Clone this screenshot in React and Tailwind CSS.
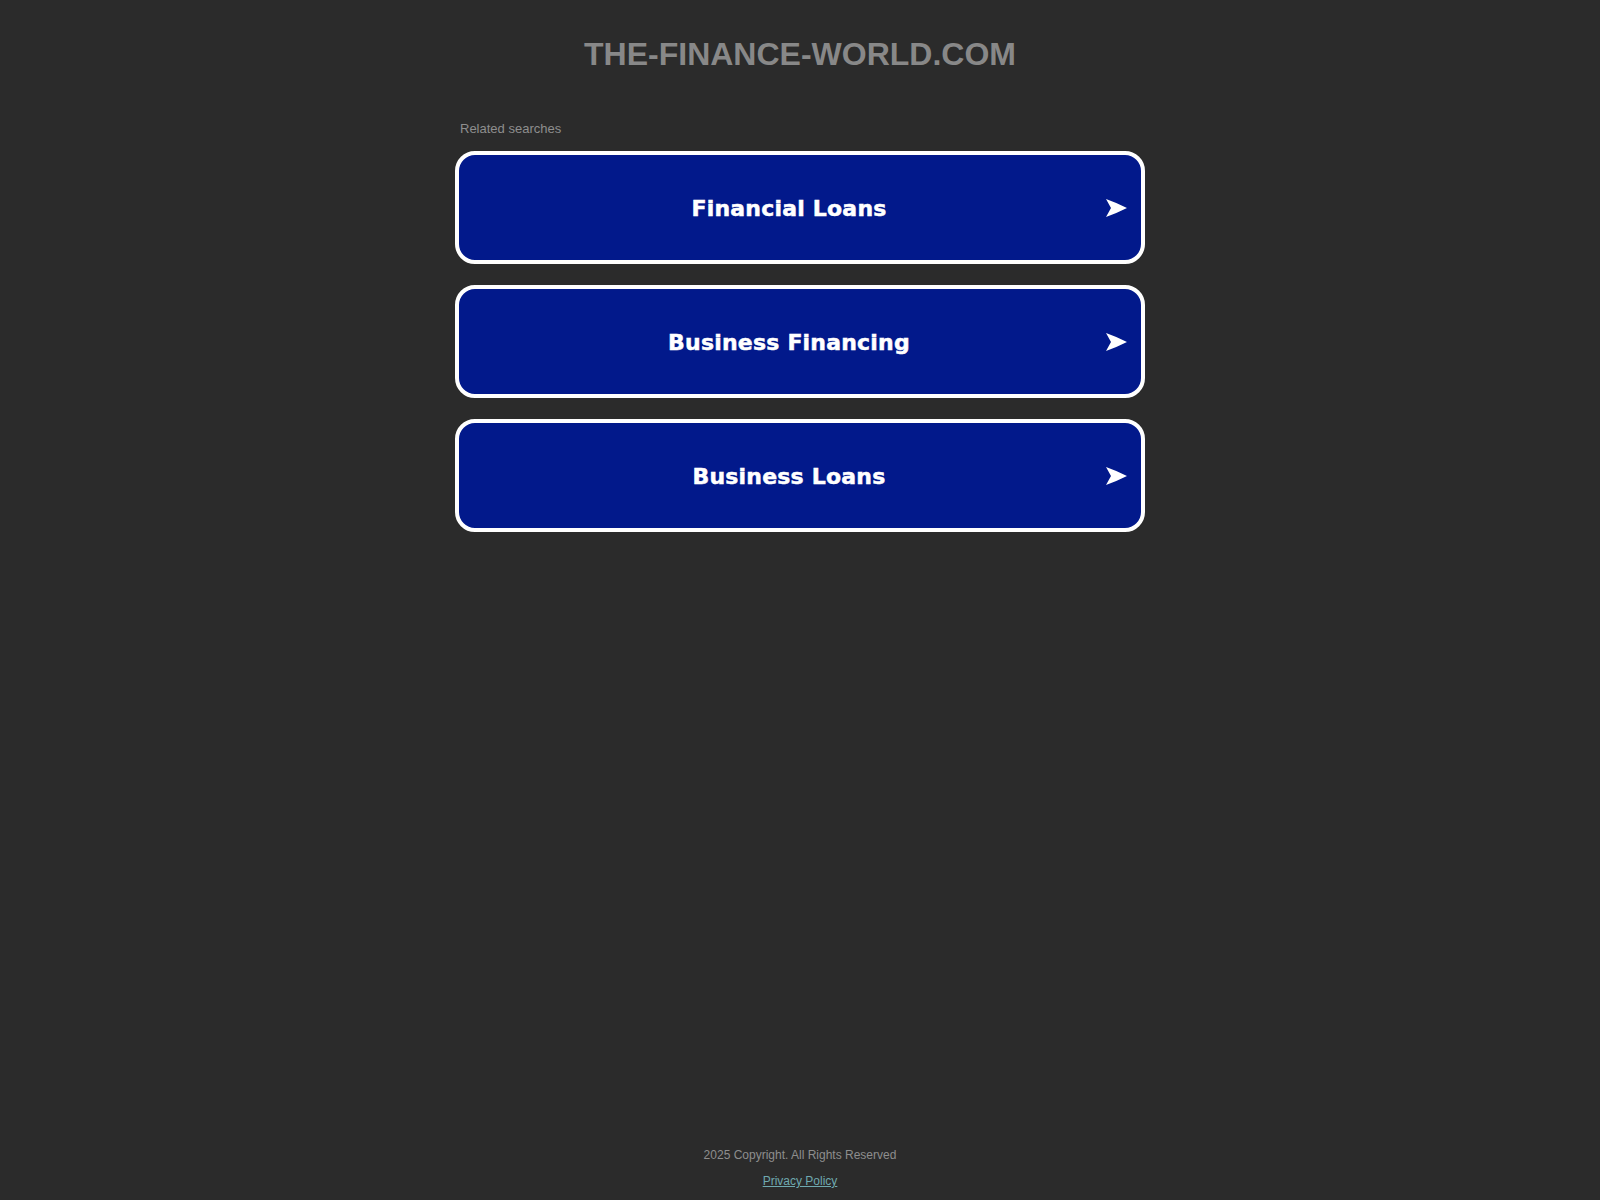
const searches = ['Financial Loans', 'Business Financing', 'Business Loans'];

function Arrow() {
  return (
    <svg className="w-[21px] h-[18px] shrink-0" viewBox="0 0 21 18" fill="#ffffff">
      <path d="M0 0 Q10 3.5 21 9 Q10 14.5 0 18 L5 9 Z" />
    </svg>
  );
}

export default function App() {
  return (
    <div className="min-h-screen flex flex-col bg-[#2b2b2b] font-['Liberation_Sans',Arial,sans-serif]">
      <main className="flex-1 flex flex-col items-center pt-[35px]">
        <h1 className="text-[32px] leading-[38px] font-bold text-[#888888]">
          THE-FINANCE-WORLD.COM
        </h1>

        <div className="w-[690px] mt-[48px]">
          <p className="text-[13px] leading-[16px] text-[#8e8e8e] pl-[5px]">Related searches</p>

          {/* Related search buttons */}
          <div className="mt-[14px] flex flex-col gap-[21px]">
            {searches.map((label) => (
              <a
                key={label}
                href="#"
                className="h-[113px] flex items-center border-4 border-white rounded-[20px] bg-[#02198b] pl-[13px] pr-[14px]"
              >
                <span className="flex-1 text-center pt-[2px] text-white font-bold text-[22px] leading-[26px] tracking-[0.2px] [-webkit-text-stroke:0.5px_#ffffff] font-['DejaVu_Sans',Verdana,sans-serif]">
                  {label}
                </span>
                <Arrow />
              </a>
            ))}
          </div>
        </div>
      </main>

      <footer className="flex flex-col items-center pb-[12px]">
        <p className="text-[12px] leading-[14px] text-[#8e8e8e]">2025 Copyright. All Rights Reserved</p>
        <a href="#" className="mt-[12px] text-[12px] leading-[14px] text-[#6fa9b0] underline">
          Privacy Policy
        </a>
      </footer>
    </div>
  );
}
